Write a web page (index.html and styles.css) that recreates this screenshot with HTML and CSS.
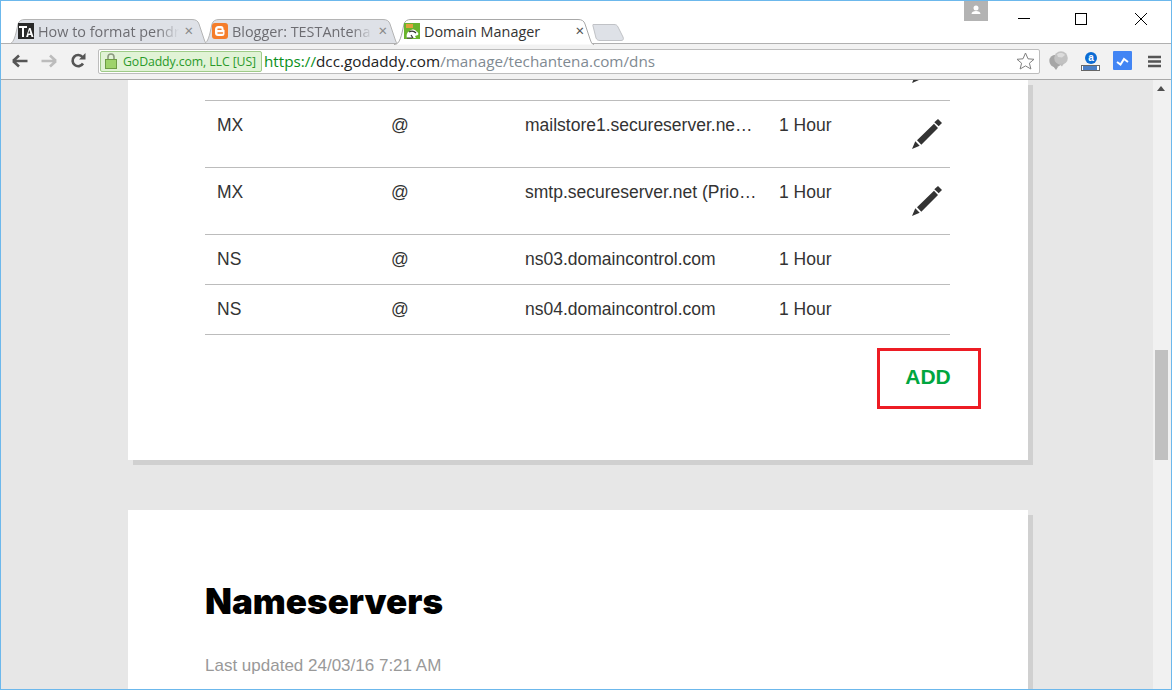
FILE: index.html
```html
<!DOCTYPE html>
<html lang="en">
<head>
<meta charset="utf-8">
<title>Domain Manager</title>
<link rel="stylesheet" href="styles.css">
</head>
<body>
<div class="window">
  <header class="tabstrip">
    <div class="tab tab-a">
      <svg class="tab-shape" width="199" height="24" viewBox="0 0 199 24"><path d="M0 25C4 25 6 22 8 14L10 5C11 2 13 .5 17 .5H184C188 .5 190 2 191 5L196 20C197 23 198 25 199 25Z" fill="#dee1e7" stroke="#b4b4b4"/></svg>
      <svg class="favicon" viewBox="0 0 16 16" width="16" height="16"><rect width="16" height="16" fill="#2a2a2a"/><path d="M1 3h8v2H6v9H4V5H1zM11 5h1.6L15.500 14h-2l-.5-2h-2.400l-.5 2h-2zM10.200 10.400h2.200L11.300 7z" fill="#fff"/></svg>
      <span class="tab-title tab-title-a">How to format pendrive</span>
      <span class="tab-x">✕</span>
    </div>
    <div class="tab tab-b">
      <svg class="tab-shape" width="196" height="24" viewBox="0 0 196 24"><path d="M0 25C4 25 6 22 8 14L10 5C11 2 13 .5 17 .5H181C185 .5 187 2 188 5L193 20C194 23 195 25 196 25Z" fill="#dee1e7" stroke="#b4b4b4"/></svg>
      <svg class="favicon" viewBox="0 0 16 16" width="16" height="16"><rect width="16" height="16" rx="3" fill="#f57d2a"/><path d="M6.500 3h2.500a2.500 2.500 0 0 1 2.500 2.500v1l1 .6v3.400a2.500 2.500 0 0 1-2.500 2.500h-4a3 3 0 0 1-3-3v-3.500a3.500 3.500 0 0 1 3.500-3.500z" fill="#fff"/><path d="M6 6.200h3M6 10h4.500" stroke="#f57d2a" stroke-width="1.500" stroke-linecap="round"/></svg>
      <span class="tab-title tab-title-b">Blogger: TESTAntena Blog</span>
      <span class="tab-x">✕</span>
    </div>
    <div class="tab tab-c">
      <svg class="tab-shape" width="200" height="26" viewBox="0 0 200 26"><path d="M0 25.500C4 25.500 6 22 8 14L10 5C11 2 13 .5 17 .5H184C188 .5 190 2 191 5L196 20C197 23 198 25.500 200 25.500" fill="#fff" stroke="#a8a8a8"/></svg>
      <svg class="favicon" viewBox="0 0 16 16" width="16" height="16"><rect width="16" height="16" fill="#6ab42d"/><path d="M2 1h7v4H2z" fill="#e0a03c"/><path d="M3 15c-1-3 0-6 3-7 1-2 5-2 6 0 2 1 3 3 2 4l-3 1 1 2z" fill="#fff"/><path d="M5 9c2-1 5-1 7 1M7 12l2 3M3 15h5" stroke="#333" stroke-width="1.200" fill="none"/></svg>
      <span class="tab-title tab-title-c">Domain Manager</span>
      <span class="tab-x tab-x-active">✕</span>
    </div>
    <svg class="newtab" width="34" height="19" viewBox="0 0 34 19"><path d="M1 1.500H22C24 1.500 25 2 26 4L31 14C32 16.500 31 17.500 29 17.500H8C6 17.500 5 17 4 15L1 3C.6 2 1 1.500 1 1.500Z" fill="#dee1e7" stroke="#c0c2c6"/></svg>
    <div class="profile"><svg viewBox="0 0 24 20" width="24" height="20"><circle cx="12" cy="7" r="2.500" fill="#fff"/><path d="M7.500 13c0-2 2-3 4.500-3s4.500 1 4.500 3z" fill="#fff"/></svg></div>
    <div class="controls">
      <svg width="58" height="30" viewBox="0 0 58 30"><path d="M24 17.500H36" stroke="#000"/></svg>
      <svg width="58" height="30" viewBox="0 0 58 30"><rect x="23.500" y="12.500" width="11" height="11" fill="none" stroke="#000"/></svg>
      <svg width="60" height="30" viewBox="0 0 60 30"><path d="M25 12L37 24M37 12L25 24" stroke="#000"/></svg>
    </div>
  </header>

  <nav class="toolbar">
    <svg class="nav-icon" width="16" height="14" viewBox="0 0 16 14"><path d="M1 7L7 1.500M1 7L7 12.500M1.500 7H15.500" stroke="#555" stroke-width="2.600" fill="none"/></svg>
    <svg class="nav-icon" width="16" height="14" viewBox="0 0 16 14"><path d="M15 7L9 1.500M15 7L9 12.500M14.500 7H.5" stroke="#bcbcbc" stroke-width="2.600" fill="none"/></svg>
    <svg class="nav-icon" width="16" height="16" viewBox="0 0 16 16"><path d="M13 10.500A5.600 5.600 0 1 1 12.500 4" stroke="#555" stroke-width="2.600" fill="none"/><path d="M9 6.500H15.500V0Z" fill="#555"/></svg>
    <div class="omnibox">
      <div class="ev-badge">
        <svg width="12" height="16" viewBox="0 0 12 16"><path d="M3 7V4a3 3 0 0 1 6 0v3" stroke="#8c9a80" stroke-width="1.600" fill="none"/><rect x=".5" y="6.500" width="11" height="9" fill="#9ed36b" stroke="#6d9c44"/></svg>
        <span class="ev-text">GoDaddy.com, LLC [US]</span>
      </div>
      <div class="url"><span class="url-scheme">https://</span><span class="url-host">dcc.godaddy.com</span><span class="url-path">/manage/techantena.com/dns</span></div>
      <svg class="star" width="19" height="18" viewBox="0 0 19 18"><path d="M9.500 1L12 6.800L18 7.300L13.400 11.200L14.900 17L9.500 13.900L4.100 17L5.600 11.200L1 7.300L7 6.800Z" fill="#fff" stroke="#808080"/></svg>
    </div>
    <div class="extensions">
      <svg width="20" height="20" viewBox="0 0 20 20"><circle cx="6.500" cy="10" r="6.200" fill="#a6a6a6"/><path d="M4 15l3 4 2-3z" fill="#a6a6a6"/><circle cx="12" cy="7" r="6.800" fill="#c2c2c2"/><path d="M8 3.500c2.500-2 6-2 8 .5l-3 2.500-4-.5z" fill="#dcdcdc"/><path d="M10 13l3 2.500 2-3.500z" fill="#bdbdbd"/></svg>
      <svg width="20" height="20" viewBox="0 0 20 20"><circle cx="10" cy="7" r="6" fill="#0c6cd4"/><text x="10" y="10" class="ext-a">a</text><rect x=".5" y="14.500" width="18" height="5" fill="#fff" stroke="#666"/><rect x="2" y="15" width="14" height="4" fill="#4a7fc7"/></svg>
      <svg width="20" height="20" viewBox="0 0 20 20"><rect width="19" height="19" rx="1" fill="#4285f4"/><path d="M4 11L7.500 13.500L11 8L15 11" stroke="#fff" stroke-width="2" fill="none"/></svg>
      <svg class="menu-icon" width="14" height="13" viewBox="0 0 14 13"><path d="M0 2H13M0 6.500H13M0 11H13" stroke="#555" stroke-width="2.400"/></svg>
    </div>
  </nav>

  <div class="viewport">
    <main class="page">
      <section class="card card-records">
        <div class="table">
          <div class="row row-cut">
            <span class="pencil-slot pencil-cut"><svg class="pencil" width="30" height="30" viewBox="0 0 30 30"><path d="M0 30L3.300 22.300L7.700 26.700ZM5 21.300L22 4.700L26 9L9.300 25.700ZM22.300 3.300L26 0L30 4L26.700 7.300Z" fill="#333"/></svg></span>
          </div>
          <div class="row row-tall">
            <span>MX</span><span>@</span><span class="cell-value">mailstore1.secureserver.net (Priority: 10)</span><span>1 Hour</span>
            <span class="pencil-slot"><svg class="pencil" width="30" height="30" viewBox="0 0 30 30"><path d="M0 30L3.300 22.300L7.700 26.700ZM5 21.300L22 4.700L26 9L9.300 25.700ZM22.300 3.300L26 0L30 4L26.700 7.300Z" fill="#333"/></svg></span>
          </div>
          <div class="row row-tall">
            <span>MX</span><span>@</span><span class="cell-value">smtp.secureserver.net (Priority: 0)</span><span>1 Hour</span>
            <span class="pencil-slot"><svg class="pencil" width="30" height="30" viewBox="0 0 30 30"><path d="M0 30L3.300 22.300L7.700 26.700ZM5 21.300L22 4.700L26 9L9.300 25.700ZM22.300 3.300L26 0L30 4L26.700 7.300Z" fill="#333"/></svg></span>
          </div>
          <div class="row">
            <span>NS</span><span>@</span><span class="cell-value">ns03.domaincontrol.com</span><span>1 Hour</span>
          </div>
          <div class="row">
            <span>NS</span><span>@</span><span class="cell-value">ns04.domaincontrol.com</span><span>1 Hour</span>
          </div>
        </div>
        <div class="actions"><div class="add-box">ADD</div></div>
      </section>
      <section class="card card-ns">
        <h1 class="ns-title">Nameservers</h1>
        <p class="ns-updated">Last updated 24/03/16 7:21 AM</p>
      </section>
    </main>
    <aside class="scrollbar">
      <div class="scroll-arrow"></div>
      <div class="scroll-thumb"></div>
    </aside>
  </div>
</div>
</body>
</html>
```
FILE: styles.css
```css
* { box-sizing: border-box; }
html, body { margin: 0; height: 100%; overflow: hidden; }
body { font-family: "Liberation Sans", Arial, sans-serif; background: #fff; }

.window {
  width: 1172px;
  height: 690px;
  border: 1px solid #6cb8ec;
  display: flex;
  flex-direction: column;
  overflow: hidden;
}

.tabstrip {
  height: 43px;
  flex: none;
  display: flex;
  align-items: flex-end;
  padding-left: 7px;
  border-bottom: 1px solid #b0b0b0;
  background: #fff;
  font-family: "Open Sans", "Noto Sans", sans-serif;
}
.tab {
  position: relative;
  height: 24px;
  display: flex;
  align-items: center;
  padding: 0 0 0 10px;
  flex: none;
}
.tab-a { width: 194px; z-index: 1; }
.tab-b { width: 192px; z-index: 1; }
.tab-c { width: 198px; height: 25px; margin-bottom: -1px; padding-bottom: 1px; z-index: 2; }
.tab-shape { position: absolute; left: 0; top: 0; }
.favicon { position: relative; flex: none; margin-right: 4px; }
.tab-title {
  position: relative;
  font-size: 14.400px;
  white-space: nowrap;
  overflow: hidden;
  color: #6d6d72;
  -webkit-mask-image: linear-gradient(to right, #000 85%, transparent);
  mask-image: linear-gradient(to right, #000 85%, transparent);
}
.tab-title-a { width: 141px; }
.tab-title-b { width: 141px; }
.tab-title-c {
  width: 146px;
  color: #333;
  -webkit-mask-image: none;
  mask-image: none;
}
.tab-x { position: relative; font-size: 11.500px; margin-left: 5px; color: #8a8a8a; font-family: "DejaVu Sans", sans-serif; font-weight: bold; }
.tab-x-active { color: #555; }
.newtab { flex: none; margin: 0 0 1px 0; }

.profile {
  align-self: flex-start;
  width: 24px;
  height: 20px;
  margin-left: 338px;
  background: #b3b3b3;
  flex: none;
}
.controls {
  align-self: flex-start;
  display: flex;
  flex: none;
  margin-left: 6px;
}

.toolbar {
  height: 36px;
  flex: none;
  display: flex;
  align-items: center;
  padding: 0 11px 1px;
  background: #f2f2f2;
  border-bottom: 1px solid #a9a9a9;
  gap: 13px;
}
.nav-icon { flex: none; }
.omnibox {
  width: 942px;
  height: 25px;
  margin-left: -1px;
  flex: none;
  display: flex;
  align-items: center;
  padding: 0 3px 0 1px;
  background: #fff;
  border: 1px solid #bdbdbd;
  border-radius: 2px;
}
.ev-badge {
  height: 21px;
  width: 162px;
  flex: none;
  display: flex;
  align-items: center;
  gap: 6px;
  padding-left: 4px;
  background: #e1f3d6;
  border: 1px solid #9fcb89;
  border-radius: 2px;
}
.ev-text {
  font-family: "Open Sans", "Noto Sans", sans-serif;
  font-size: 12.300px;
  color: #2a9a2a;
  white-space: nowrap;
  letter-spacing: -0.100px;
}
.url {
  flex: 1;
  margin-left: 2px;
  font-family: "Open Sans", "Noto Sans", sans-serif;
  font-size: 15.250px;
  white-space: nowrap;
}
.url-scheme { color: #0a8f20; }
.url-host { color: #222; }
.url-path { color: #7f8a92; }
.star { flex: none; margin-right: 1px; }
.extensions {
  display: flex;
  align-items: center;
  gap: 12px;
  margin-left: -4px;
  flex: none;
}
.menu-icon { margin-left: 3px; }
.ext-a {
  font-family: "Liberation Sans", sans-serif;
  font-size: 10px;
  font-weight: bold;
  fill: #fff;
  text-anchor: middle;
}

.viewport {
  flex: 1;
  min-height: 0;
  display: flex;
}
.page {
  flex: 1;
  min-width: 0;
  overflow: hidden;
  background: #e7e7e7;
  padding-left: 127px;
}
.scrollbar {
  position: relative;
  width: 18px;
  flex: none;
  background: #f1f1f1;
}
.scroll-arrow {
  position: absolute;
  left: 4px;
  top: 6px;
  border-left: 4px solid transparent;
  border-right: 4px solid transparent;
  border-bottom: 5px solid #505050;
}
.scroll-thumb {
  position: absolute;
  left: 2px;
  top: 270px;
  width: 13px;
  height: 110px;
  background: #c0c0c0;
}

.card {
  width: 900px;
  background: #fff;
  box-shadow: 5px 5px 0 #d0d0d0;
  padding: 0 77px;
}
.card-records { height: 380px; }
.card-ns { margin-top: 50px; height: 400px; }

.row {
  position: relative;
  display: grid;
  grid-template-columns: 174px 134px 254px 1fr;
  height: 50px;
  padding: 12px 0 0 12px;
  border-bottom: 1px solid #bcbcbc;
  font-size: 17.500px;
  line-height: 24px;
  color: #333;
}
.table { width: 745px; }
.row-cut { height: 21px; padding: 0; overflow: hidden; }
.row-tall { height: 67px; }
.cell-value {
  max-width: 232px;
  white-space: nowrap;
  overflow: hidden;
  text-overflow: ellipsis;
}
.pencil-slot { position: absolute; right: 8px; top: 18px; line-height: 0; }
.pencil-cut { top: -27px; }
.actions {
  display: flex;
  justify-content: flex-end;
  padding: 13px 47px 0 0;
  margin-right: -77px;
}
.add-box {
  width: 104px;
  height: 61px;
  padding: 0 2px 4px 0;
  display: flex;
  align-items: center;
  justify-content: center;
  border: 3px solid #ed1c24;
  color: #00a63f;
  font-size: 21px;
  font-weight: bold;
}

.ns-title {
  margin: 0;
  padding-top: 66px;
  font-family: "Inter", sans-serif;
  font-weight: 900;
  font-size: 35px;
  line-height: 50px;
  color: #000;
}
.ns-updated {
  margin: 29px 0 0;
  font-size: 17px;
  line-height: 22px;
  color: #999;
}
```
